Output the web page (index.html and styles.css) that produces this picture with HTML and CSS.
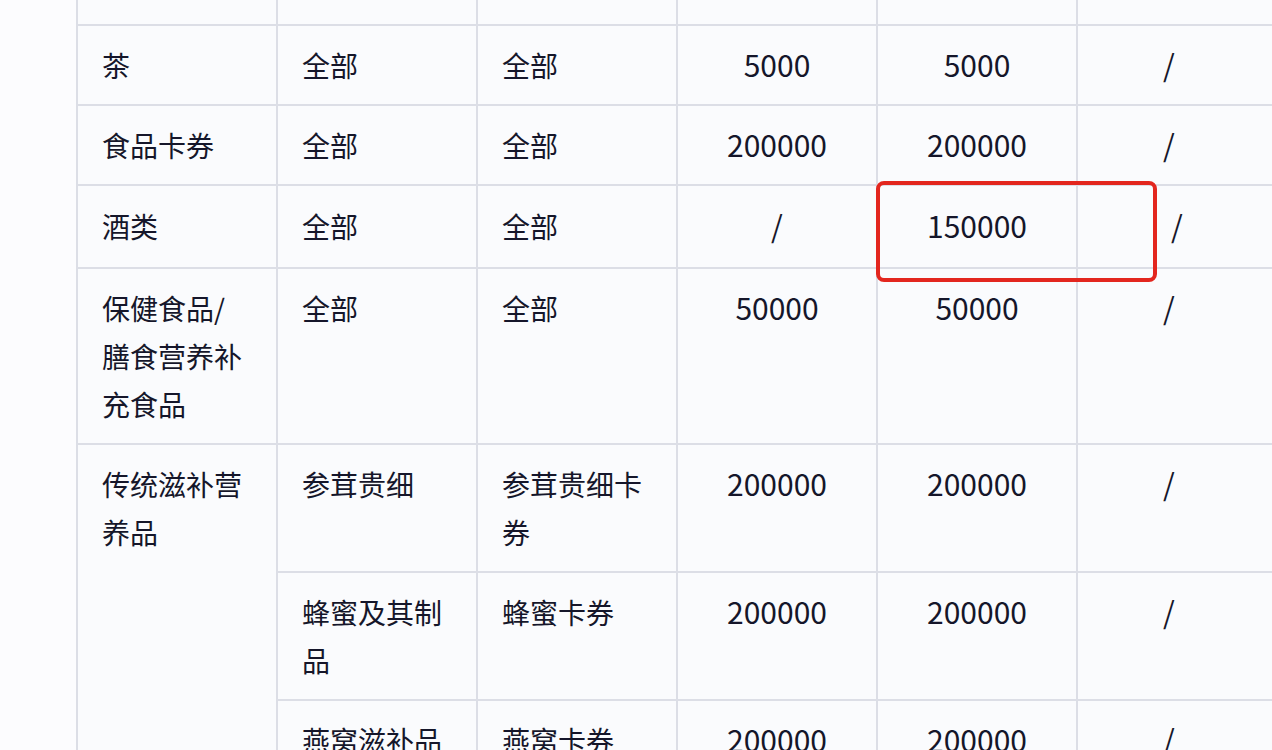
FILE: index.html
```html
<!DOCTYPE html>
<html lang="zh-CN">
<head>
<meta charset="utf-8">
<link rel="stylesheet" href="styles.css">
</head>
<body>
<div class="page">
  <div class="sheet">
    <table class="grid">
      <colgroup>
        <col class="c"><col class="c"><col class="c"><col class="c"><col class="c"><col class="c-last">
      </colgroup>
      <tbody>
        <tr class="r-top"><td></td><td></td><td></td><td></td><td></td><td></td></tr>
        <tr>
          <td>茶</td><td>全部</td><td>全部</td>
          <td class="num">5000</td><td class="num">5000</td><td class="slash">/</td>
        </tr>
        <tr>
          <td>食品卡券</td><td>全部</td><td>全部</td>
          <td class="num">200000</td><td class="num">200000</td><td class="slash">/</td>
        </tr>
        <tr class="r-wine">
          <td>酒类</td><td>全部</td><td>全部</td>
          <td class="num">/</td><td class="num">150000</td><td class="slash slash-off">/</td>
        </tr>
        <tr>
          <td>保健食品/<br>膳食营养补<br>充食品</td><td>全部</td><td>全部</td>
          <td class="num">50000</td><td class="num">50000</td><td class="slash">/</td>
        </tr>
        <tr>
          <td rowspan="3">传统滋补营<br>养品</td><td>参茸贵细</td><td>参茸贵细卡<br>券</td>
          <td class="num">200000</td><td class="num">200000</td><td class="slash">/</td>
        </tr>
        <tr>
          <td>蜂蜜及其制<br>品</td><td>蜂蜜卡券</td>
          <td class="num">200000</td><td class="num">200000</td><td class="slash">/</td>
        </tr>
        <tr>
          <td>燕窝滋补品</td><td>燕窝卡券</td>
          <td class="num">200000</td><td class="num">200000</td><td class="slash">/</td>
        </tr>
      </tbody>
    </table>
    <div class="mark"></div>
  </div>
</div>
</body>
</html>
```

FILE: styles.css
```css
html, body {
  margin: 0;
  padding: 0;
  height: 100%;
  overflow: hidden;
  background: #fcfcfe;
}

.page {
  padding-left: 76px;
  font-family: "Noto Sans CJK SC", "Noto Sans", sans-serif;
  font-size: 28px;
  line-height: 48px;
  color: #15162a;
}

.sheet {
  position: relative;
  width: 1200px;
}

.grid {
  border-collapse: collapse;
  table-layout: fixed;
  width: 1200px;
  background: #fafbfd;
}

.grid col.c { width: 200px; }
.grid col.c-last { width: 200px; }

.grid td {
  border: 2px solid #dcdee6;
  padding: 15px 20px 15px 24px;
  vertical-align: top;
  text-align: left;
  white-space: nowrap;
}

.grid tr.r-top td {
  border-top: none;
  height: 24px;
  padding: 0;
}

.grid tr.r-wine td {
  padding-top: 16px;
  padding-bottom: 17px;
}

.grid td.num,
.grid td.slash {
  text-align: center;
  padding-top: 14px;
  padding-bottom: 16px;
  padding-left: 0;
  padding-right: 0;
  font-size: 30px;
}

.grid td.slash {
  padding-right: 16px;
}

.grid tr.r-wine td.num,
.grid tr.r-wine td.slash {
  padding-top: 15px;
  padding-bottom: 18px;
}

.grid td.slash-off,
.grid tr.r-wine td.slash-off {
  padding-right: 0;
}

.mark {
  position: absolute;
  left: 800px;
  top: 181px;
  width: 273px;
  height: 93px;
  border: 4px solid #e3261e;
  border-radius: 8px;
}
```
